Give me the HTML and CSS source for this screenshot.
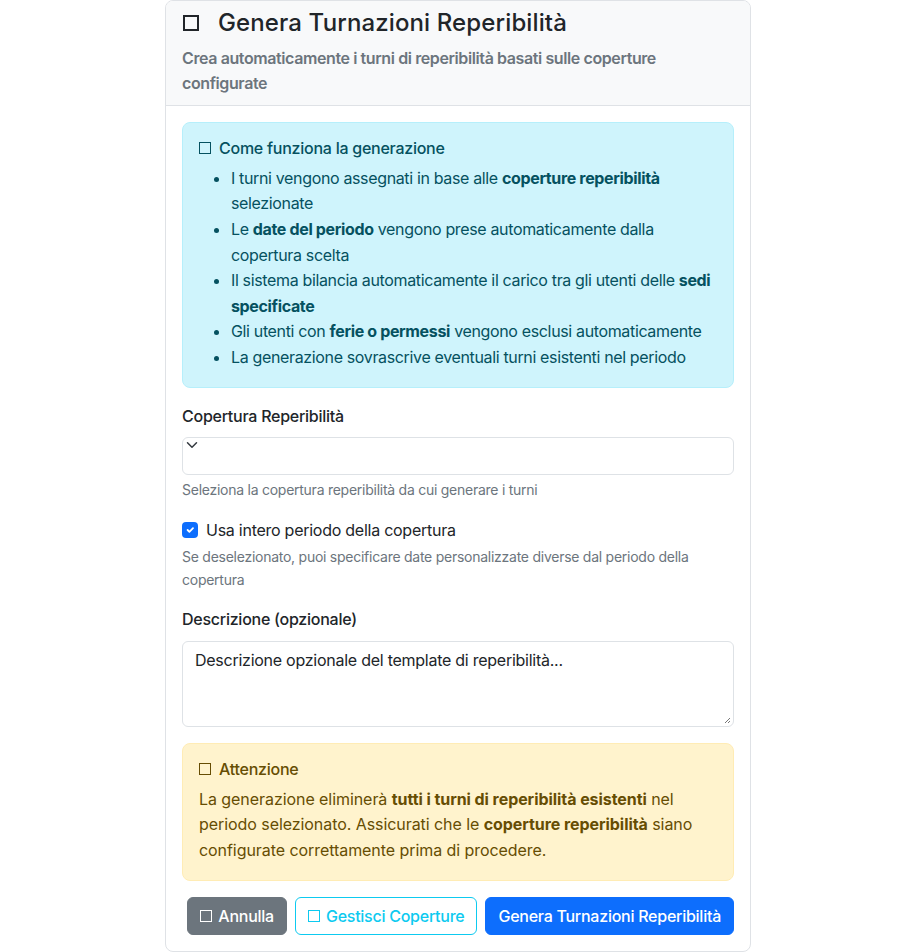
FILE: index.html
```html
<!DOCTYPE html>
<html lang="it">
<head>
<meta charset="utf-8">
<title>Genera Turnazioni Reperibilità</title>
<link rel="stylesheet" href="styles.css">
</head>
<body>
<div class="card">
  <div class="card-header">
    <h4 class="title"><span class="sq sq-lg"></span>Genera Turnazioni Reperibilità</h4>
    <p class="subtitle">Crea automaticamente i turni di reperibilità basati sulle coperture configurate</p>
  </div>
  <div class="card-body">
    <div class="alert alert-info">
      <h6 class="alert-heading"><span class="sq"></span>Come funziona la generazione</h6>
      <ul class="alert-list">
        <li>I turni vengono assegnati in base alle <strong>coperture reperibilità</strong> selezionate</li>
        <li>Le <strong>date del periodo</strong> vengono prese automaticamente dalla copertura scelta</li>
        <li>Il sistema bilancia automaticamente il carico tra gli utenti delle <strong>sedi specificate</strong></li>
        <li>Gli utenti con <strong>ferie o permessi</strong> vengono esclusi automaticamente</li>
        <li>La generazione sovrascrive eventuali turni esistenti nel periodo</li>
      </ul>
    </div>

    <div class="field">
      <label class="form-label">Copertura Reperibilità</label>
      <div class="form-select">
        <svg class="chev" width="12" height="8" viewBox="0 0 16 10"><path d="M2 2l6 6 6-6" fill="none" stroke="#343a40" stroke-width="2" stroke-linecap="round" stroke-linejoin="round"/></svg>
      </div>
      <div class="form-text">Seleziona la copertura reperibilità da cui generare i turni</div>
    </div>

    <div class="field">
      <div class="form-check">
        <span class="check">
          <svg width="12" height="12" viewBox="0 0 20 20"><path d="M6 10l3 3 6-6" fill="none" stroke="#fff" stroke-width="3" stroke-linecap="round" stroke-linejoin="round"/></svg>
        </span>
        <label class="check-label">Usa intero periodo della copertura</label>
      </div>
      <div class="form-text tight">Se deselezionato, puoi specificare date personalizzate diverse dal periodo della copertura</div>
    </div>

    <div class="field">
      <label class="form-label">Descrizione (opzionale)</label>
      <div class="textarea">
        <span class="placeholder">Descrizione opzionale del template di reperibilità...</span>
        <svg class="grip" width="8" height="8" viewBox="0 0 8 8"><path d="M7 2L2 7M7 5L5 7" stroke="#777" stroke-width="1"/></svg>
      </div>
    </div>

    <div class="alert alert-warning">
      <h6 class="alert-heading"><span class="sq"></span>Attenzione</h6>
      <p class="alert-text">La generazione eliminerà <strong>tutti i turni di reperibilità esistenti</strong> nel periodo selezionato. Assicurati che le <strong>coperture reperibilità</strong> siano configurate correttamente prima di procedere.</p>
    </div>

    <div class="actions">
      <button class="btn btn-secondary"><span class="sq sq-btn"></span>Annulla</button>
      <button class="btn btn-outline-info"><span class="sq sq-btn"></span>Gestisci Coperture</button>
      <button class="btn btn-primary">Genera Turnazioni Reperibilità</button>
    </div>
  </div>
</div>
</body>
</html>
```
FILE: styles.css
```css
* { box-sizing: border-box; }
html, body { margin: 0; padding: 0; background: #fff; }
body {
  font-family: Inter, "Noto Sans", sans-serif;
  font-size: 16px;
  line-height: 1.6;
  letter-spacing: -0.016em;
  color: #212529;
}
.card {
  width: 586px;
  margin: 0 auto;
  border: 1px solid #dfe2e6;
  border-radius: 8px;
  background: #fff;
  overflow: hidden;
}
.card-header {
  background: #f8f9fa;
  border-bottom: 1px solid #dfe2e6;
  padding: 8px 16px 9px;
}
.title {
  margin: 0 0 8px;
  font-size: 24px;
  font-weight: 500;
  line-height: 1.2;
  letter-spacing: 0.005em;
  display: flex;
  align-items: center;
  color: #212529;
}
.sq {
  display: inline-block;
  width: 12px;
  height: 12px;
  border: 1.5px solid currentColor;
  margin-right: 8px;
  flex: none;
}
.sq-lg {
  width: 16px;
  height: 16px;
  border-width: 2px;
  margin-left: 1px;
  margin-right: 19px;
}
.subtitle {
  margin: 0;
  color: #6c757d;
  font-weight: 600;
  line-height: 1.56;
  letter-spacing: -0.025em;
}
.card-body { padding: 16px; }
.alert {
  border: 1px solid transparent;
  border-radius: 8px;
  padding: 16px;
  margin-bottom: 16px;
}
.alert-info { background: #cff4fc; border-color: #b6effb; color: #055160; }
.alert-warning { background: #fff3cd; border-color: #ffecb5; color: #664d03; }
.alert-heading {
  margin: 0 0 8px;
  font-size: 16px;
  font-weight: 500;
  line-height: 1.2;
  display: flex;
  align-items: center;
}
.alert-heading .sq { width: 12px; height: 12px; margin-right: 8px; }
.alert-list { margin: 0; padding-left: 32px; letter-spacing: -0.022em; }
.alert-text { margin: 0; letter-spacing: -0.004em; }
strong { font-weight: 700; }
.field { margin-bottom: 16px; }
.form-label { display: block; margin-bottom: 8px; font-weight: 500; }
.form-select {
  position: relative;
  height: 38px;
  border: 1px solid #dee2e6;
  border-radius: 6px;
  background: #fff;
}
.chev { position: absolute; left: 3px; top: 3px; }
.form-text {
  margin-top: 4px;
  font-size: 14px;
  color: #6c757d;
}
.form-text.tight { margin-top: 3px; }
.form-check {
  display: flex;
  align-items: center;
  min-height: 25.6px;
}
.check {
  width: 16px;
  height: 16px;
  border-radius: 4px;
  background: #0d6efd;
  display: inline-flex;
  align-items: center;
  justify-content: center;
  margin-right: 8px;
  flex: none;
}
.textarea {
  position: relative;
  height: 86px;
  border: 1px solid #dee2e6;
  border-radius: 6px;
  padding: 6px 12px;
  line-height: 1.5;
}
.placeholder { color: #212529; }
.grip { position: absolute; right: 2px; bottom: 2px; }
.actions {
  display: flex;
  justify-content: flex-end;
  gap: 8px;
}
.btn {
  font-family: inherit;
  font-size: 16px;
  font-weight: 500;
  line-height: 1.5;
  letter-spacing: -0.016em;
  white-space: nowrap;
  height: 38px;
  padding: 6px 12px;
  border-radius: 6px;
  border: 1px solid transparent;
  display: inline-flex;
  align-items: center;
}
.sq-btn { width: 12px; height: 12px; margin-right: 6px; }
.btn-secondary { background: #6c757d; border-color: #6c757d; color: #fff; }
.btn-outline-info { background: #fff; border-color: #0dcaf0; color: #0dcaf0; }
.btn-primary { background: #0d6efd; border-color: #0d6efd; color: #fff; }
```
